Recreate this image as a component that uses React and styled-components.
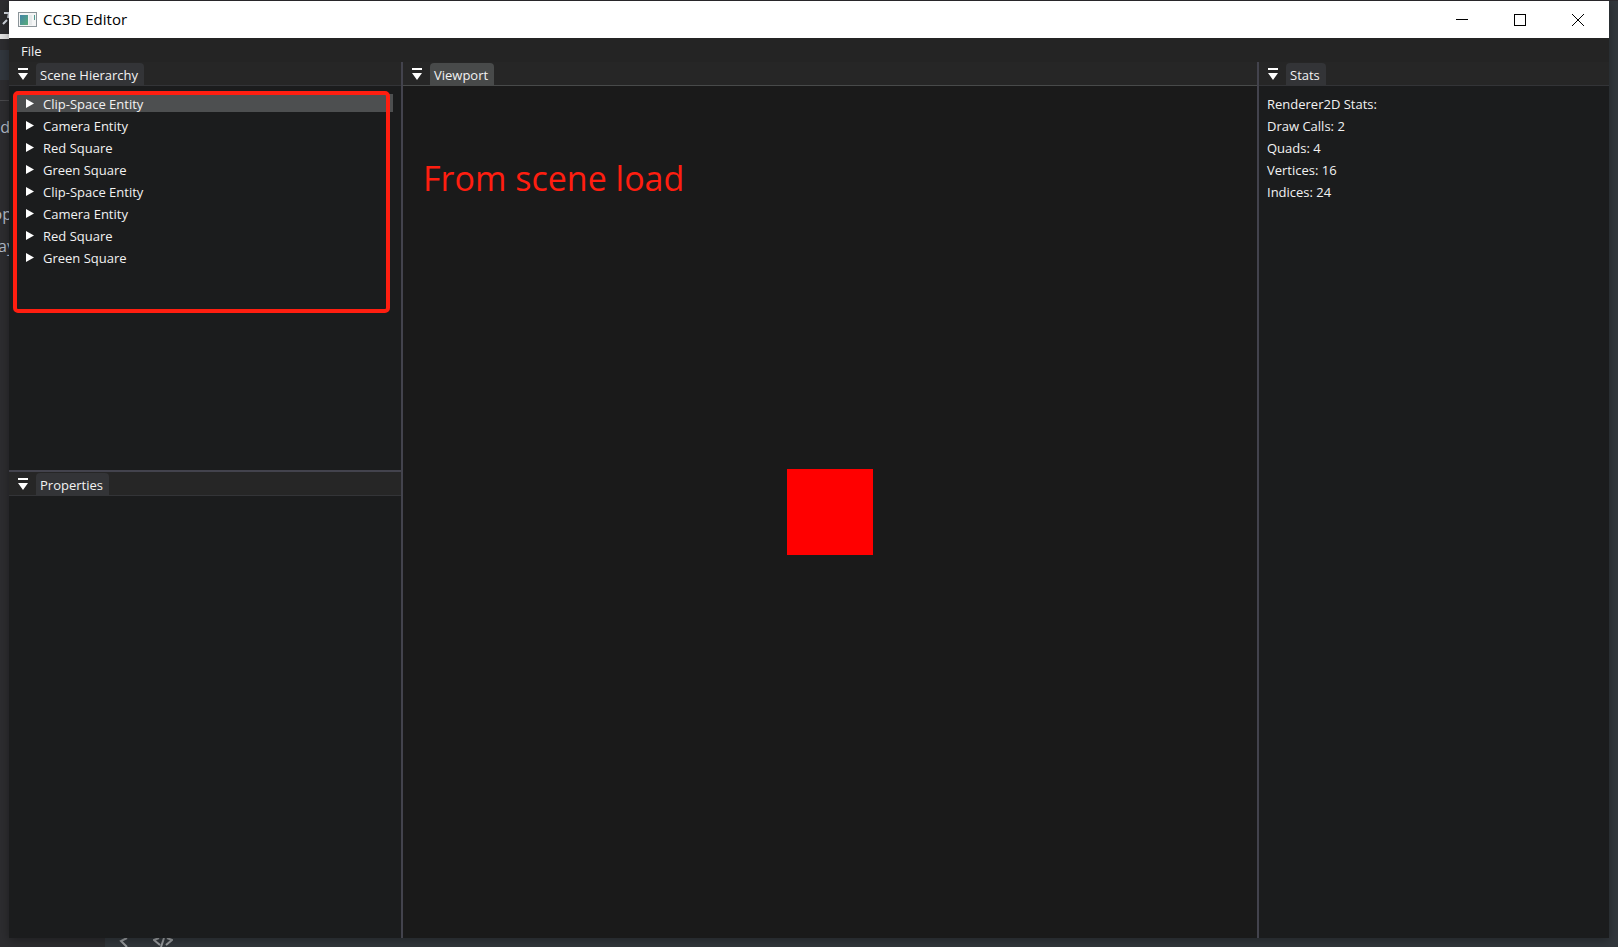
import React from "react";
import styled, { createGlobalStyle } from "styled-components";

const GlobalStyle = createGlobalStyle`
  * { box-sizing: border-box; }
  body {
    margin: 0;
    background: #2f3338;
    color: #f2f2f2;
    font: 13px/18px "Open Sans", "Noto Sans", sans-serif;
  }
  button { font: inherit; color: inherit; border: 0; padding: 0; background: none; text-align: left; }
  h1, h2, p, ul { margin: 0; padding: 0; font: inherit; list-style: none; }
`;

const Desktop = styled.div`
  position: relative;
  isolation: isolate;
  display: flex;
  min-height: 100vh;
  padding: 1px 9px 9px;
`;

const Backdrop = styled.div`
  position: absolute;
  inset: 0;
  z-index: -1;
  overflow: hidden;
  display: flex;
  background: #32373c;
  border-top: 1px solid #2d2b30;
`;

const BackSide = styled.div`
  width: 105px;
  background: #2d2d30;
`;

const BackBlock = styled.div`
  display: flex;
  align-items: center;
  justify-content: flex-end;
  width: ${(p) => p.$width || 10}px;
  height: ${(p) => p.$height}px;
  background: ${(p) => p.$color || "transparent"};
  color: #b4bcc8;
  font-size: 16px;
`;

const BackFoot = styled.div`
  flex: 1;
  display: flex;
  align-items: flex-end;
  gap: 24px;
  padding-left: 14px;
  svg { display: block; }
`;

const Window = styled.main`
  flex: 1;
  min-width: 0;
  display: flex;
  flex-direction: column;
  background: #1b1c1d;
  box-shadow: 0 2px 10px rgba(0, 0, 0, 0.35);
`;

const TitleBar = styled.header`
  display: flex;
  align-items: center;
  height: 37px;
  padding: 0 2px 0 9px;
  background: #fff;
  color: #000;
`;

const Title = styled.h1`
  flex: 1;
  margin-left: 6px;
  padding-bottom: 2px;
  font: 15px/20px "Open Sans", "Noto Sans", sans-serif;
`;

const WindowButton = styled.button`
  display: grid;
  place-items: center;
  width: 58px;
  height: 36px;
`;

const MenuBar = styled.nav`
  display: flex;
  align-items: center;
  height: 24px;
  padding: 2px 12px 0;
  background: #242424;
`;

const Dock = styled.div`
  flex: 1;
  display: grid;
  grid-template-columns: 392px minmax(0, 1fr) 350px;
  gap: 2px;
  background: #43434d;
`;

const LeftColumn = styled.div`
  display: grid;
  grid-template-rows: 408px 1fr;
  gap: 2px;
`;

const Panel = styled.section`
  display: flex;
  flex-direction: column;
  min-width: 0;
  background: ${(p) => (p.$canvas ? "#1a1a1a" : "#1b1c1d")};
`;

const TabBar = styled.div`
  display: flex;
  align-items: flex-end;
  height: 24px;
  padding-left: 9px;
  background: #262626;
  border-bottom: 1px solid ${(p) => (p.$active ? "#484a4a" : "#333437")};
`;

const DockMenu = styled.button`
  width: 18px;
  height: 20px;
  svg { display: block; }
`;

const Tab = styled.h2`
  height: 22px;
  padding: 3px 6px 0 4px;
  border-radius: 4px 4px 0 0;
  line-height: 18px;
  background: ${(p) => (p.$active ? "#484a4a" : "#333437")};
`;

const Tree = styled.ul`
  display: flex;
  flex-direction: column;
  gap: 4px;
  padding: 8px;
`;

const TreeRow = styled.button`
  display: flex;
  align-items: center;
  width: 100%;
  height: 18px;
  padding-left: 9px;
  gap: 9px;
  background: ${(p) => (p.$selected ? "#4d4f50" : "transparent")};
  svg { display: block; }
  span { line-height: 18px; padding-top: 2px; }
`;

const StatsList = styled.div`
  display: flex;
  flex-direction: column;
  gap: 4px;
  padding: 9px 8px;
`;

const Scene = styled.div`
  position: relative;
  flex: 1;
  display: grid;
  place-items: center;
`;

const Quad = styled.div`
  width: 86px;
  height: 86px;
  background: #f00;
`;

const Note = styled.p`
  position: absolute;
  left: 20px;
  top: 68px;
  color: #ff1e10;
  font-size: 34px;
  line-height: 48px;
  white-space: nowrap;
`;

const HierarchyBody = styled.div`
  position: relative;
`;

const Outline = styled.div`
  position: absolute;
  left: 4px;
  top: 5px;
  right: 11px;
  height: 222px;
  border: 4px solid #ff1e10;
  border-radius: 5px;
  pointer-events: none;
`;

const entities = [
  "Clip-Space Entity", "Camera Entity", "Red Square", "Green Square",
  "Clip-Space Entity", "Camera Entity", "Red Square", "Green Square",
];

const stats = ["Renderer2D Stats:", "Draw Calls: 2", "Quads: 4", "Vertices: 16", "Indices: 24"];

function AppIcon() {
  return (
    <svg width="19" height="15" viewBox="0 0 19 15" aria-hidden="true">
      <defs>
        <linearGradient id="screen" x1="0" y1="0" x2="1" y2="1">
          <stop offset="0" stopColor="#4384a8" />
          <stop offset="1" stopColor="#59ad78" />
        </linearGradient>
      </defs>
      <rect x="0.5" y="0.5" width="18" height="14" fill="#f4f5f5" stroke="#8b9499" />
      <rect x="2" y="3" width="8" height="10" fill="url(#screen)" />
      <rect x="11" y="3" width="3" height="10" fill="#e6e9ea" />
      <rect x="16" y="3" width="1" height="5" fill="#4f9a90" />
    </svg>
  );
}

function TabHeader({ title, active }) {
  return (
    <TabBar $active={active}>
      <DockMenu aria-label={`${title} dock menu`}>
        <svg width="10" height="20" viewBox="0 0 10 20">
          <path d="M0 3h10v2H0zM0 8h10L5 15z" fill="#fff" />
        </svg>
      </DockMenu>
      <Tab $active={active}>{title}</Tab>
    </TabBar>
  );
}

export default function App() {
  return (
    <>
      <GlobalStyle />
      <Desktop>
        <Backdrop aria-hidden="true">
          <BackSide>
            <BackBlock $height={33}>
              <svg width="10" height="16" viewBox="0 0 10 16" fill="none" stroke="#d5dae2" strokeWidth="2">
                <path d="M4 3h6M9 3 8 8M3 14l4-4" />
              </svg>
            </BackBlock>
            <BackBlock $height={5} $color="#e4e4e4" />
            <BackBlock $height={11} />
            <BackBlock $height={30} $color="#32373e" />
            <BackBlock $height={20} />
            <BackBlock $height={1} $color="#4a4a4d" />
            <BackBlock $height={52}>d</BackBlock>
            <BackBlock $height={45} />
            <BackBlock $height={32} $width={12}>op</BackBlock>
            <BackBlock $height={32} $width={15}>ay</BackBlock>
          </BackSide>
          <BackFoot>
            <svg width="10" height="9" viewBox="0 0 10 9" fill="none" stroke="#9a9da0" strokeWidth="2">
              <path d="M8 0 2 3l6 6" />
            </svg>
            <svg width="20" height="9" viewBox="0 0 20 9" fill="none" stroke="#9a9da0" strokeWidth="2">
              <path d="M6 0 1 2l6 5M11 0 8 9M14 0l5 2-6 5" />
            </svg>
          </BackFoot>
        </Backdrop>

        <Window>
          <TitleBar>
            <AppIcon />
            <Title>CC3D Editor</Title>
            <WindowButton aria-label="Minimize">
              <svg width="12" height="12" viewBox="0 0 12 12"><path d="M0 5.5h12" stroke="#000" /></svg>
            </WindowButton>
            <WindowButton aria-label="Maximize">
              <svg width="12" height="12" viewBox="0 0 12 12"><rect x="0.5" y="0.5" width="11" height="11" fill="none" stroke="#000" /></svg>
            </WindowButton>
            <WindowButton aria-label="Close">
              <svg width="12" height="12" viewBox="0 0 12 12"><path d="M0 0l12 12M12 0 0 12" stroke="#000" /></svg>
            </WindowButton>
          </TitleBar>
          <MenuBar>
            <button>File</button>
          </MenuBar>
          <Dock>
            <LeftColumn>
              <Panel>
                <TabHeader title="Scene Hierarchy" />
                <HierarchyBody>
                  <Tree>
                    {entities.map((name, i) => (
                      <li key={i}>
                        <TreeRow $selected={i === 0}>
                          <svg width="8" height="9" viewBox="0 0 8 9"><path d="M0 0v9l8-4.500z" fill="#fff" /></svg>
                          <span>{name}</span>
                        </TreeRow>
                      </li>
                    ))}
                  </Tree>
                  <Outline />
                </HierarchyBody>
              </Panel>
              <Panel>
                <TabHeader title="Properties" />
              </Panel>
            </LeftColumn>
            <Panel $canvas>
              <TabHeader title="Viewport" active />
              <Scene>
                <Quad />
                <Note>From scene load</Note>
              </Scene>
            </Panel>
            <Panel>
              <TabHeader title="Stats" />
              <StatsList>
                {stats.map((line) => <p key={line}>{line}</p>)}
              </StatsList>
            </Panel>
          </Dock>
        </Window>
      </Desktop>
    </>
  );
}
